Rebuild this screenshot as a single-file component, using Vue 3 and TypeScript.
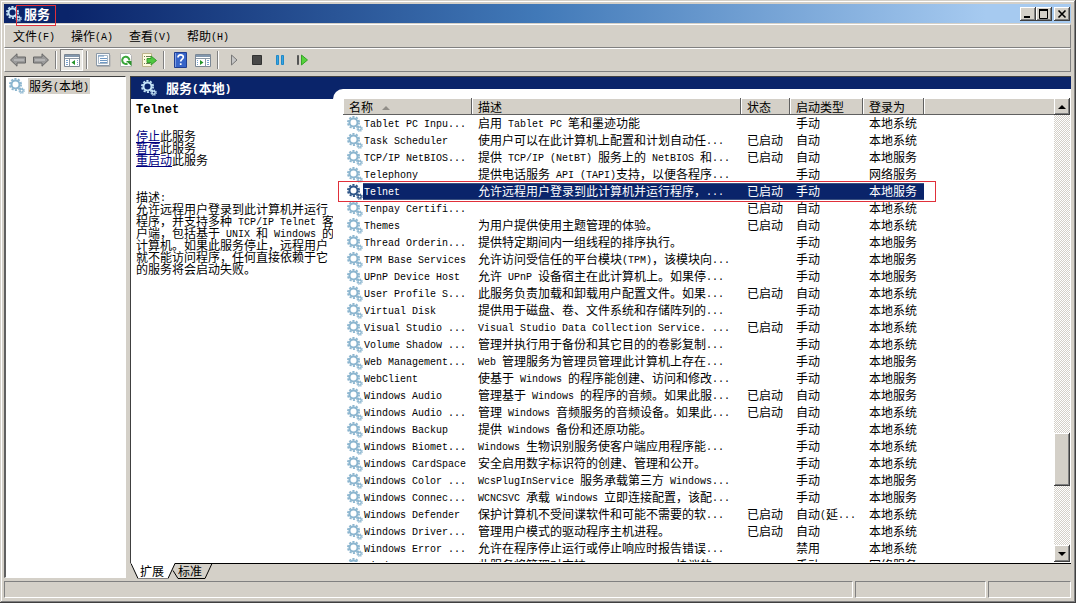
<script setup lang="ts">
import { defineComponent, h, ref } from 'vue'

interface Service {
  name: string
  description: string
  status: string
  startup: string
  account: string
}

// Splits mixed text so that Latin runs can use the half-width face.
const MixedText = defineComponent({
  props: { text: { type: String, required: true } },
  setup(props) {
    return () =>
      (props.text.match(/[\x20-\x7e]+|[^\x20-\x7e]+/g) ?? []).map((run) =>
        /^[\x20-\x7e]/.test(run) ? h('span', { class: 'latin' }, run) : run,
      )
  },
})

const SYSTEM = '本地系统'
const LOCAL = '本地服务'
const NETWORK = '网络服务'
const RUNNING = '已启动'

const row = (
  name: string,
  description: string,
  status: string,
  startup: string,
  account: string,
): Service => ({ name, description, status, startup, account })

const services: Service[] = [
  row('Tablet PC Inpu...', '启用 Tablet PC 笔和墨迹功能', '', '手动', SYSTEM),
  row('Task Scheduler', '使用户可以在此计算机上配置和计划自动任...', RUNNING, '自动', SYSTEM),
  row('TCP/IP NetBIOS...', '提供 TCP/IP (NetBT) 服务上的 NetBIOS 和...', RUNNING, '自动', LOCAL),
  row('Telephony', '提供电话服务 API (TAPI)支持，以便各程序...', '', '手动', NETWORK),
  row('Telnet', '允许远程用户登录到此计算机并运行程序，...', RUNNING, '手动', LOCAL),
  row('Tenpay Certifi...', '', RUNNING, '自动', SYSTEM),
  row('Themes', '为用户提供使用主题管理的体验。', RUNNING, '自动', SYSTEM),
  row('Thread Orderin...', '提供特定期间内一组线程的排序执行。', '', '手动', LOCAL),
  row('TPM Base Services', '允许访问受信任的平台模块(TPM)，该模块向...', '', '手动', LOCAL),
  row('UPnP Device Host', '允许 UPnP 设备宿主在此计算机上。如果停...', '', '手动', LOCAL),
  row('User Profile S...', '此服务负责加载和卸载用户配置文件。如果...', RUNNING, '自动', SYSTEM),
  row('Virtual Disk', '提供用于磁盘、卷、文件系统和存储阵列的...', '', '手动', SYSTEM),
  row('Visual Studio ...', 'Visual Studio Data Collection Service. ...', RUNNING, '手动', SYSTEM),
  row('Volume Shadow ...', '管理并执行用于备份和其它目的的卷影复制...', '', '手动', SYSTEM),
  row('Web Management...', 'Web 管理服务为管理员管理此计算机上存在...', '', '手动', LOCAL),
  row('WebClient', '使基于 Windows 的程序能创建、访问和修改...', '', '手动', LOCAL),
  row('Windows Audio', '管理基于 Windows 的程序的音频。如果此服...', RUNNING, '自动', LOCAL),
  row('Windows Audio ...', '管理 Windows 音频服务的音频设备。如果此...', RUNNING, '自动', SYSTEM),
  row('Windows Backup', '提供 Windows 备份和还原功能。', '', '手动', SYSTEM),
  row('Windows Biomet...', 'Windows 生物识别服务使客户端应用程序能...', '', '手动', SYSTEM),
  row('Windows CardSpace', '安全启用数字标识符的创建、管理和公开。', '', '手动', SYSTEM),
  row('Windows Color ...', 'WcsPlugInService 服务承载第三方 Windows...', '', '手动', LOCAL),
  row('Windows Connec...', 'WCNCSVC 承载 Windows 立即连接配置，该配...', '', '手动', LOCAL),
  row('Windows Defender', '保护计算机不受间谍软件和可能不需要的软...', RUNNING, '自动(延...', SYSTEM),
  row('Windows Driver...', '管理用户模式的驱动程序主机进程。', RUNNING, '自动', SYSTEM),
  row('Windows Error ...', '允许在程序停止运行或停止响应时报告错误...', '', '禁用', SYSTEM),
  row('Windows Event ...', '此服务将管理对支持 WS-Management 协议的...', '', '手动', NETWORK),
]

const selected = ref('Telnet')
const menus = ['文件(F)', '操作(A)', '查看(V)', '帮助(H)']
const summary =
  '允许远程用户登录到此计算机并运行程序，并支持多种 TCP/IP Telnet 客户端，包括基于 UNIX 和 Windows 的计算机。如果此服务停止，远程用户就不能访问程序，任何直接依赖于它的服务将会启动失败。'
</script>

<template>
  <div class="window">
    <svg class="defs" width="0" height="0" aria-hidden="true">
      <symbol id="gear" viewBox="0 0 16 16">
        <circle cx="6.5" cy="6.5" r="5.6" fill="none" stroke="currentColor" stroke-width="1.8" stroke-dasharray="2.1 1.42" />
        <circle cx="6.5" cy="6.5" r="4" fill="none" stroke="currentColor" stroke-width="2" />
        <circle cx="12.6" cy="12.6" r="2.6" fill="none" stroke="currentColor" stroke-width="1.2" stroke-dasharray="1.2 .84" />
        <circle cx="12.6" cy="12.6" r="1.6" fill="none" stroke="currentColor" stroke-width="1.3" />
      </symbol>
    </svg>

    <header class="title-bar">
      <svg class="gear gear-light" width="16" height="16"><use href="#gear" /></svg>
      <h1>服务<span class="mark mark-title"></span></h1>
      <div class="window-buttons">
        <button type="button" aria-label="最小化">
          <svg width="12" height="10"><path d="M2 8h6" stroke="#000" stroke-width="2" /></svg>
        </button>
        <button type="button" aria-label="最大化">
          <svg width="12" height="10"><path d="M1.500 1v8.500h8V1" fill="none" stroke="#000" /><path d="M1 1h9" stroke="#000" stroke-width="2" /></svg>
        </button>
        <button type="button" class="close" aria-label="关闭">
          <svg width="12" height="10"><path d="M2.500 1.500l7 7M9.500 1.500l-7 7" stroke="#000" stroke-width="1.600" /></svg>
        </button>
      </div>
    </header>

    <nav class="menu-bar">
      <button v-for="menu in menus" :key="menu" type="button"><span><MixedText :text="menu" /></span></button>
    </nav>

    <div class="toolbar">
      <button type="button" aria-label="后退">
        <svg width="18" height="16"><path d="M1.500 8L8 1.800V5h8.500v6H8v3.200z" fill="#9a9a9a" stroke="#666" /><path d="M5 8h10" stroke="#bcbcbc" stroke-width="1.500" /></svg>
      </button>
      <button type="button" aria-label="前进">
        <svg width="18" height="16"><path d="M16.500 8L10 1.800V5H1.500v6H10v3.200z" fill="#9a9a9a" stroke="#666" /><path d="M3 8h10" stroke="#bcbcbc" stroke-width="1.500" /></svg>
      </button>
      <i></i>
      <button type="button" class="pressed" aria-label="显示/隐藏控制台树">
        <svg width="16" height="16"><path d="M.5 2.500h15v12H.5z" fill="#fff" stroke="#7b8794" /><path d="M1 3h14v2H1z" fill="#8297ad" /><path d="M1 6.500h14M5.500 7v7.500" stroke="#8b98a5" /><path d="M2 8.500h2M2 10.500h2M2 12.500h2M13 8.500h1M13 10.500h1M13 12.500h1" stroke="#79a3cf" /><path d="M11 8v5L7.500 10.500z" fill="#24942a" /></svg>
      </button>
      <i></i>
      <button type="button" aria-label="属性">
        <svg width="16" height="16"><path d="M1.500 1.500h13v12h-13z" fill="#f7f9fb" stroke="#8c99a6" /><path d="M3.500 3.500h9v8h-9z" fill="#fff" stroke="#a9b9c8" /><path d="M3 4h6M5 6.500h7M5 8.500h7M5 10.500h7" stroke="#6f98c3" /><path d="M2 14.500h13V3" fill="none" stroke="#adadad" /></svg>
      </button>
      <button type="button" aria-label="刷新">
        <svg width="16" height="16"><path d="M2.500 1.500h9l2 2v11h-11z" fill="#fff" stroke="#b5b5b5" /><path d="M9.500 11.500A3.600 3.600 0 1 1 11.400 8.500" fill="none" stroke="#3ba63b" stroke-width="2" /><path d="M8 9h5.500v5z" fill="#2c942c" /></svg>
      </button>
      <button type="button" aria-label="导出列表">
        <svg width="16" height="16"><path d="M1.500 1.500h9v13h-9z" fill="#fffbe0" stroke="#bdb58c" /><path d="M3 4.500h1M5 4.500h5M3 7.500h1M3 11.500h1M5 11.500h4" stroke="#6c7d56" /><path d="M6 6.500h4V4l5.500 4.500L10 13v-2.500H6z" fill="#4fc840" stroke="#389b2f" /></svg>
      </button>
      <i></i>
      <button type="button" aria-label="帮助">
        <svg width="16" height="16"><path d="M2.500.5h12v15h-12z" fill="#3764c8" stroke="#203e91" /><path d="M3.500 1v14" stroke="#7e9de3" /><path d="M6 5.500C6 2 11.500 2.200 11.300 5.200 11.200 7.200 8.700 7.300 8.700 9.600M8.700 11.300v1.800" fill="none" stroke="#fff" stroke-width="1.700" /></svg>
      </button>
      <button type="button" aria-label="显示/隐藏操作窗格">
        <svg width="16" height="16"><path d="M.5 2.500h15v12H.5z" fill="#fff" stroke="#7b8794" /><path d="M1 3h14v2H1z" fill="#8297ad" /><path d="M1 6.500h14M10.500 7v7.500" stroke="#8b98a5" /><path d="M2 8.500h1M2 10.500h1M2 12.500h1M12 8.500h2M12 10.500h2M12 12.500h2" stroke="#79a3cf" /><path d="M5 8v5l3.500-2.500z" fill="#24942a" /></svg>
      </button>
      <i></i>
      <button type="button" aria-label="启动服务">
        <svg width="16" height="16"><path d="M5.500 3v10l5.500-5z" fill="#c5c5c5" stroke="#777" /></svg>
      </button>
      <button type="button" aria-label="停止服务">
        <svg width="16" height="16"><path d="M3.500 3.500h9v9h-9z" fill="#484848" stroke="#333" /></svg>
      </button>
      <button type="button" aria-label="暂停服务">
        <svg width="16" height="16"><path d="M4.500 3.500h2v9h-2zM9.500 3.500h2v9h-2z" fill="#37a5e2" stroke="#2188c7" /></svg>
      </button>
      <button type="button" aria-label="重新启动服务">
        <svg width="16" height="16"><path d="M2.500 3.500h1v9h-1z" fill="#777" stroke="#555" /><path d="M6.500 3v10l6-5z" fill="#56d33c" stroke="#35a428" /></svg>
      </button>
    </div>

    <main class="content">
      <aside class="tree">
        <a href="#services" class="tree-item">
          <svg class="gear gear-pale" width="16" height="16"><use href="#gear" /></svg>
          <span><MixedText text="服务(本地)" /></span>
        </a>
      </aside>

      <section class="right">
        <div class="pane">
          <div class="info">
            <h2>
              <svg class="gear gear-light" width="16" height="16"><use href="#gear" /></svg>
              <span><MixedText text="服务(本地)" /></span>
            </h2>
            <div class="info-body">
              <h3>Telnet</h3>
              <p class="links">
                <a href="#stop">停止</a>此服务<br />
                <a href="#pause">暂停</a>此服务<br />
                <a href="#restart">重启动</a>此服务
              </p>
              <p><MixedText text="描述:" /></p>
              <p><MixedText :text="summary" /></p>
            </div>
          </div>

          <div class="list">
            <div class="table-area">
              <table>
                <colgroup>
                  <col class="col-name" />
                  <col class="col-description" />
                  <col class="col-status" />
                  <col class="col-startup" />
                  <col class="col-account" />
                  <col />
                </colgroup>
                <thead>
                  <tr>
                    <th>名称<svg class="sort" width="8" height="4"><path d="M0 4l4-4 4 4z" fill="#918e88" /></svg></th>
                    <th>描述</th>
                    <th>状态</th>
                    <th>启动类型</th>
                    <th>登录为</th>
                    <th></th>
                  </tr>
                </thead>
                <tbody>
                  <tr
                    v-for="service in services"
                    :key="service.name"
                    :class="{ selected: service.name === selected }"
                    @click="selected = service.name"
                  >
                    <td class="name">
                      <div class="name-cell">
                        <svg class="gear gear-pale" width="16" height="16"><use href="#gear" /></svg>
                        <span class="label"><MixedText :text="service.name" /></span>
                      </div>
                      <span v-if="service.name === 'Telnet'" class="mark mark-row"></span>
                    </td>
                    <td><MixedText :text="service.description" /></td>
                    <td>{{ service.status }}</td>
                    <td><MixedText :text="service.startup" /></td>
                    <td>{{ service.account }}</td>
                    <td></td>
                  </tr>
                </tbody>
              </table>
            </div>
            <div class="scrollbar">
              <button type="button" aria-label="向上滚动">
                <svg width="8" height="4"><path d="M0 4l4-4 4 4z" /></svg>
              </button>
              <div class="track"><div class="thumb"></div></div>
              <button type="button" aria-label="向下滚动">
                <svg width="8" height="4"><path d="M0 0l4 4 4-4z" /></svg>
              </button>
            </div>
          </div>
        </div>

        <div class="tabs">
          <svg width="84" height="17" aria-hidden="true">
            <path d="M42 .5h40L75 15.500H48l-5-8" fill="#d4d0c8" stroke="#000" />
            <path d="M0 0h45l-7 15.500H8z" fill="#fff" />
            <path d="M1 .5l7 15M38 15.500l7-15" fill="none" stroke="#000" />
            <path d="M8 15.500h30" stroke="#808080" />
          </svg>
          <button type="button">扩展</button>
          <button type="button">标准</button>
        </div>
      </section>
    </main>

    <footer class="status-bar">
      <span></span>
      <span></span>
      <span></span>
    </footer>
  </div>
</template>

<style>
body {
  margin: 0;
}

.latin {
  font-family: "Liberation Mono", monospace;
  font-size: 10px;
  line-height: 0;
  vertical-align: 1px;
}
</style>

<style scoped>
* {
  box-sizing: border-box;
}

.window {
  display: flex;
  flex-direction: column;
  height: 100vh;
  padding: 4px 5px 5px 4px;
  overflow: hidden;
  background: #d4d0c8;
  box-shadow: inset -1px -1px #404040, inset 1px 1px #d4d0c8, inset -2px -2px #808080, inset 2px 2px #fff;
  color: #000;
  font: 12px/12px "Noto Sans CJK SC", sans-serif;
  text-autospace: no-autospace;
  text-spacing-trim: space-all;
}

.defs {
  position: absolute;
}

button {
  display: flex;
  align-items: center;
  justify-content: center;
  margin: 0;
  padding: 0;
  border: 0;
  background: none;
  color: inherit;
  font: inherit;
}

svg {
  display: block;
  flex: none;
}

h1,
h2,
h3,
p {
  margin: 0;
  font-size: 12px;
}

.gear-light {
  color: #c4e3f7;
}

.gear-pale {
  color: #8bb5cf;
}

.mark {
  position: absolute;
  border: 1px solid #e0303a;
  pointer-events: none;
}

.title-bar {
  display: flex;
  flex: none;
  align-items: center;
  height: 19px;
  padding: 0 1px 0 2px;
  background: linear-gradient(90deg, #0a246a 6%, #4179b8 50%, #a6caf0 92%);
  color: #fff;
}

.title-bar h1 {
  position: relative;
  margin-left: 2px;
  font-size: 13px;
  line-height: 18px;
}

.mark-title {
  top: 0;
  left: -8px;
  width: 40px;
  height: 21px;
}

.window-buttons {
  display: flex;
  margin-left: auto;
}

.window-buttons button,
.scrollbar button,
.thumb {
  background: #d4d0c8;
  box-shadow: inset -1px -1px #404040, inset 1px 1px #fff, inset -2px -2px #808080;
}

.window-buttons button {
  width: 16px;
  height: 14px;
}

.window-buttons .close {
  margin-left: 2px;
}

.menu-bar {
  display: flex;
  flex: none;
  height: 24px;
  margin-top: 1px;
  border-top: 1px solid #fff;
  border-right: 1px solid #808080;
  border-bottom: 1px solid #808080;
  border-left: 1px solid #fff;
}

.menu-bar button {
  padding: 0 8px;
}

.toolbar {
  display: flex;
  flex: none;
  align-items: center;
  height: 24px;
  padding-left: 1px;
  border: 1px solid #808080;
  border-top-color: #fff;
  border-left-color: #fff;
}

.toolbar button {
  width: 23px;
  height: 22px;
}

.toolbar .pressed {
  background: #ebe9e4;
  box-shadow: inset 1px 1px #808080, inset -1px -1px #fff;
}

.toolbar i {
  width: 2px;
  height: 18px;
  margin: 0 3px;
  border-right: 1px solid #fff;
  border-left: 1px solid #808080;
}

.content {
  display: flex;
  flex: 1;
  gap: 4px;
  min-height: 0;
  margin-top: 4px;
}

.tree {
  flex: none;
  width: 122px;
  border: 1px solid #fff;
  border-top-color: #404040;
  border-left: 2px solid #606060;
  background: #fff;
}

.tree-item {
  display: flex;
  gap: 3px;
  padding: 1px 3px;
  color: #000;
  text-decoration: none;
}

.tree-item > span {
  padding: 0 1px;
  background: #d4d0c8;
  line-height: 16px;
}

.right {
  display: flex;
  flex: 1;
  flex-direction: column;
  min-width: 0;
}

.pane {
  display: flex;
  flex: 1;
  min-height: 0;
  border-top: 1px solid #404040;
  border-left: 1px solid #404040;
  background: #0a246a;
}

.info {
  display: flex;
  flex: none;
  flex-direction: column;
  width: 202px;
}

.info h2 {
  display: flex;
  flex: none;
  align-items: center;
  height: 22px;
  padding-left: 10px;
  color: #fff;
  font-size: 13px;
}

.info h2 svg {
  margin-right: 9px;
}

.info h2 :deep(.latin) {
  font-size: 11px;
}

.info-body {
  flex: 1;
  padding: 5px 0 0 5px;
  background: #fff;
}

.info-body h3 {
  font: bold 12px/12px "Liberation Mono", monospace;
}

.info-body p {
  width: 200px;
}

.info-body .links {
  margin: 14px 0 25px;
}

.info-body a {
  color: #00007f;
}

.list {
  display: flex;
  flex: 1;
  min-width: 0;
  margin-top: 12px;
  padding: 9px 1px 1px 0;
  border-top-left-radius: 10px;
  background: #fff;
}

.table-area {
  flex: 1;
  min-width: 0;
  padding-left: 10px;
  overflow: hidden;
}

table {
  width: 100%;
  border-spacing: 0;
  table-layout: fixed;
}

.col-name {
  width: 129px;
}

.col-description {
  width: 269px;
}

.col-status {
  width: 49px;
}

.col-startup {
  width: 73px;
}

.col-account {
  width: 61px;
}

th {
  height: 17px;
  padding: 0 0 0 6px;
  background: #d4d0c8;
  box-shadow: inset -1px -1px #606060, inset 1px 1px #fff;
  font-weight: normal;
  text-align: left;
}

th:last-child {
  box-shadow: inset 0 -1px #606060, inset 1px 1px #fff;
}

.sort {
  display: inline-block;
  margin-left: 9px;
  vertical-align: middle;
}

td {
  height: 17px;
  padding: 0 0 2px 6px;
  white-space: pre;
}

td.name {
  position: relative;
  padding: 0 0 0 4px;
}

.name-cell {
  display: flex;
  align-items: center;
}

.label {
  flex: 1;
  padding: 0 0 2px 1px;
  line-height: 15px;
}

.selected td:not(.name, :last-child),
.selected .label {
  background: #0a246a;
  box-shadow: inset 0 1px #39507f, inset 0 -1px #39507f;
  color: #fff;
}

.selected .gear {
  color: #2f5688;
}

.mark-row {
  z-index: 1;
  top: -2px;
  left: -5px;
  width: 598px;
  height: 21px;
}

.scrollbar {
  display: flex;
  flex: none;
  flex-direction: column;
  width: 16px;
}

.scrollbar button {
  flex: none;
  height: 17px;
}

.track {
  display: flex;
  flex: 1;
  flex-direction: column;
  background: repeating-conic-gradient(#fff 0 25%, #d4d0c8 0 50%) 0 0 / 2px 2px;
}

.track::before {
  flex: 318;
  content: "";
}

.track::after {
  flex: 59;
  content: "";
}

.thumb {
  flex: 53;
}

.tabs {
  position: relative;
  display: flex;
  flex: none;
  height: 15px;
  padding-left: 9px;
  border-top: 1px solid #000;
}

.tabs svg {
  position: absolute;
  top: -1px;
  left: 0;
}

.tabs button {
  position: relative;
  width: 26px;
  margin-right: 12px;
}

.status-bar {
  display: grid;
  flex: none;
  grid-template-columns: 1fr 131px 83px;
  gap: 2px;
  height: 17px;
  margin-top: 3px;
}

.status-bar span {
  border: 1px solid #fff;
  border-top-color: #808080;
  border-left-color: #808080;
}
</style>
